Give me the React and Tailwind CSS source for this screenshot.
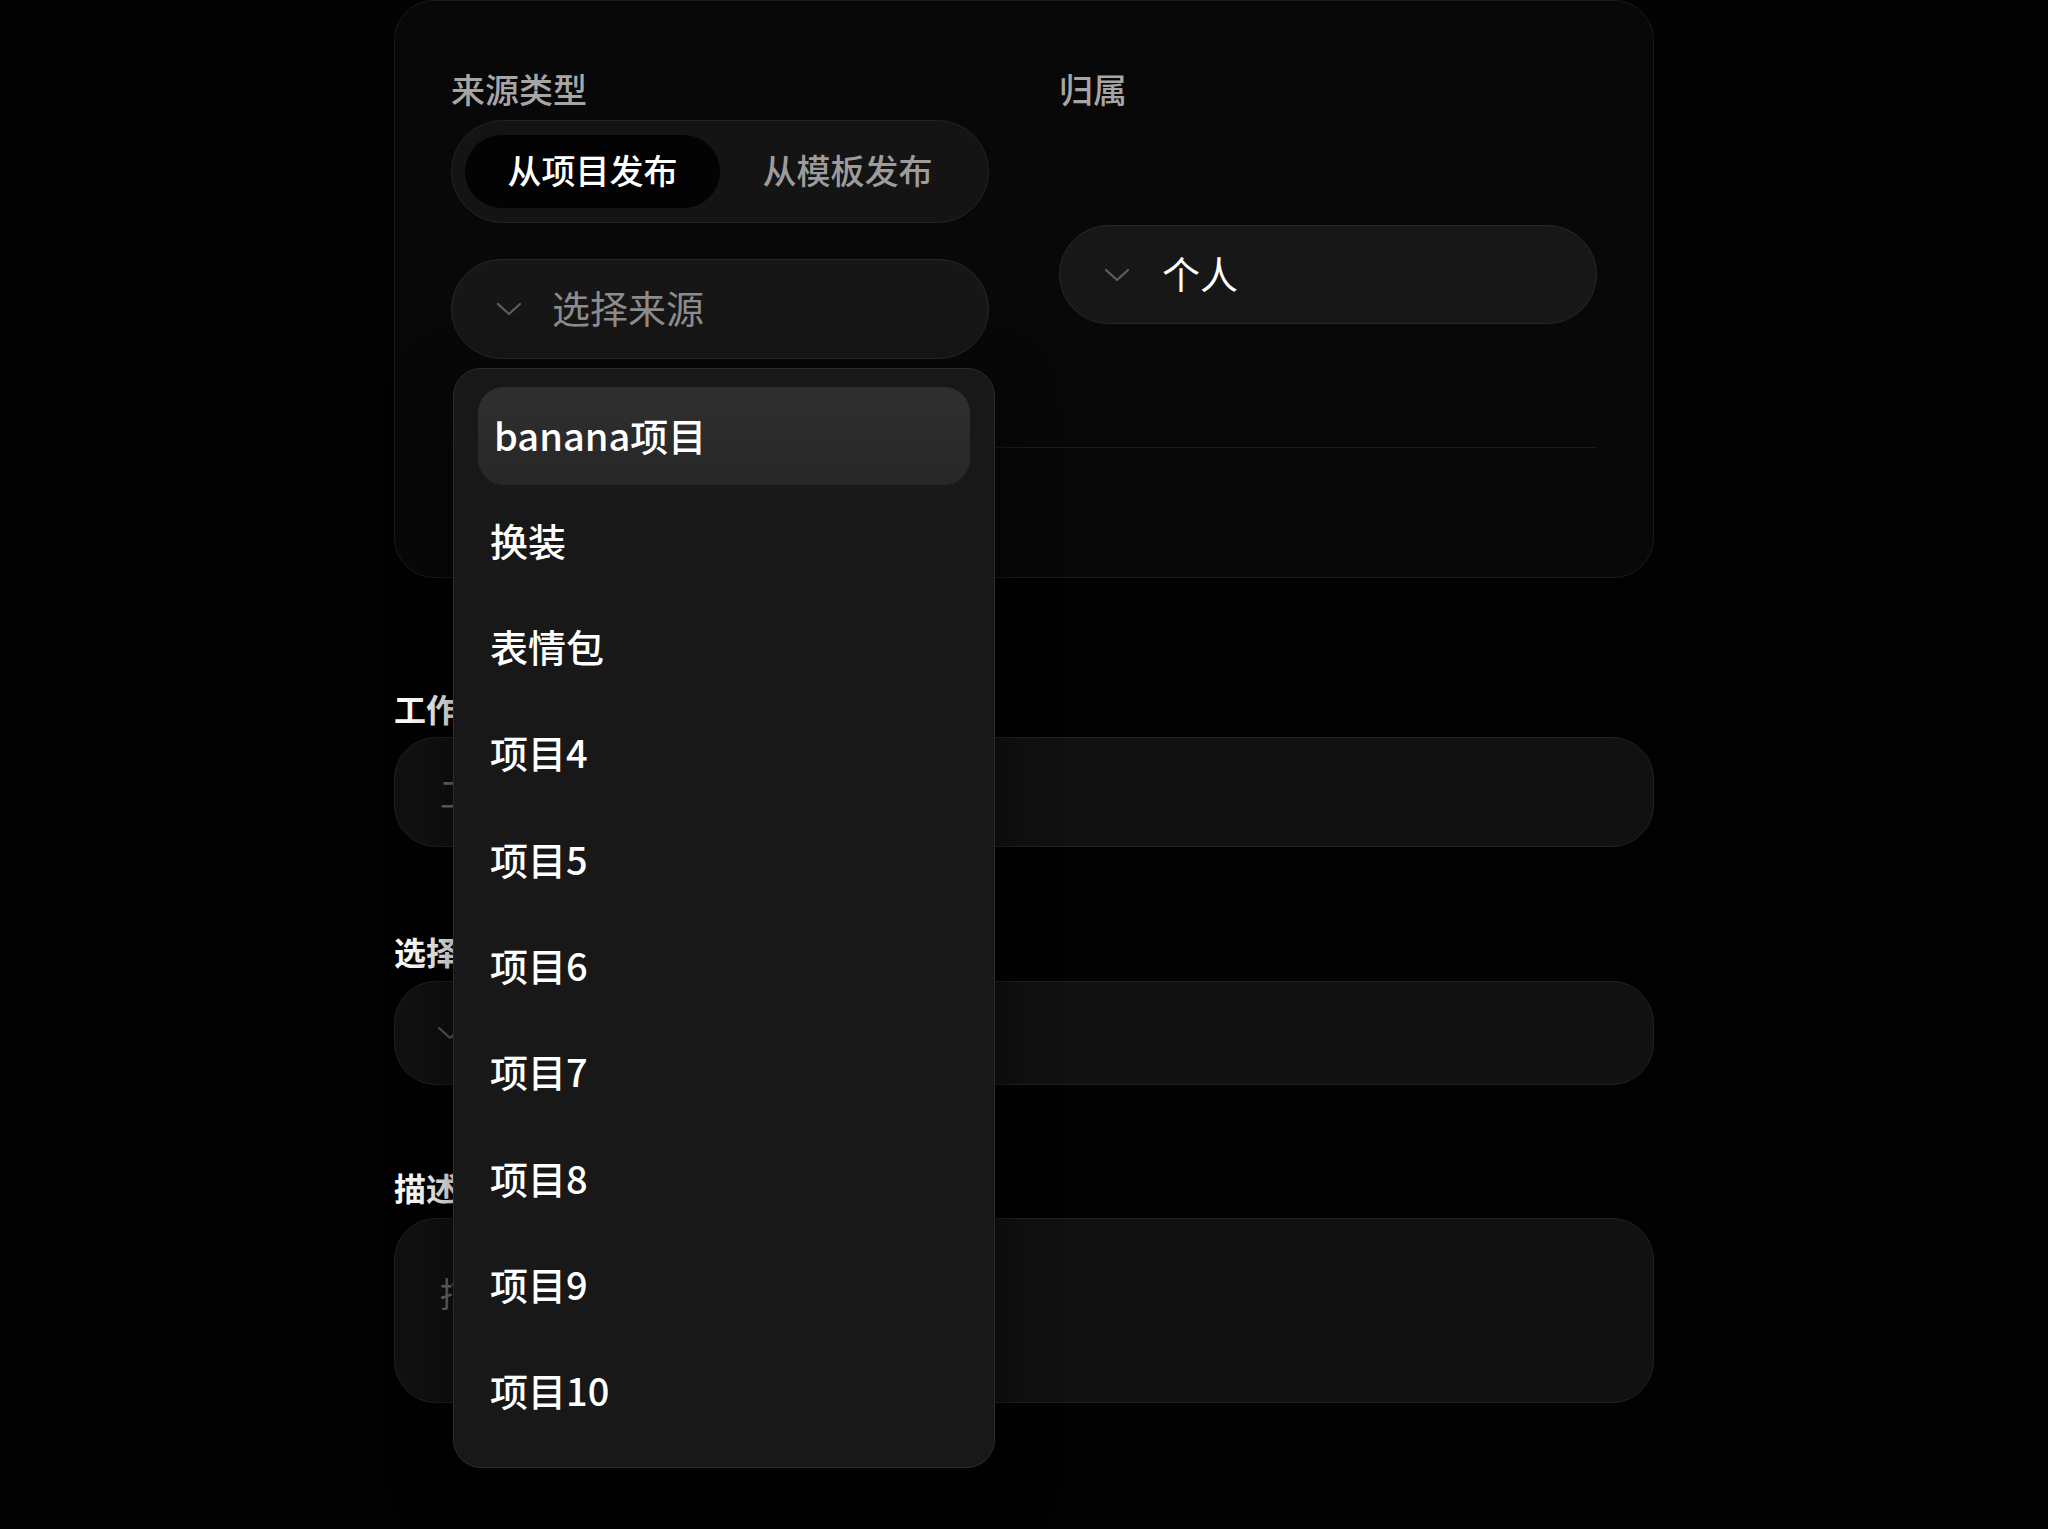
import React from "react";

const FONT = { fontFamily: '"Noto Sans CJK SC", "Noto Sans", sans-serif' };

function Chevron({ className }) {
  return (
    <svg viewBox="0 0 26 14" className={className} fill="none">
      <polyline points="2,2 13,12 24,2" stroke="currentColor" strokeWidth="2.2" strokeLinecap="round" strokeLinejoin="round" />
    </svg>
  );
}

const items = ["banana项目", "换装", "表情包", "项目4", "项目5", "项目6", "项目7", "项目8", "项目9", "项目10"];

export default function App() {
  return (
    <div className="min-h-screen w-full bg-[#020202]" style={FONT}>
      <div className="relative mx-auto w-[1260px] pb-[120px]">
        {/* Top card */}
        <div className="h-[578px] rounded-[40px] border border-[#1b1b1b] bg-[#080808] px-[56px] pt-[68px]">
          <div className="grid grid-cols-2 gap-x-[70px]">
            <div className="flex flex-col">
              <div className="h-[40px] text-[34px] leading-[40px] font-medium text-[#a6a6a6]">来源类型</div>
              <div className="mt-[11px] grid h-[103px] grid-cols-2 rounded-full border border-[#242424] bg-[#141414] px-[13px] py-[14px]">
                <div className="flex items-center justify-center rounded-full bg-[#030303] pb-[4px] text-[34px] font-medium text-white">从项目发布</div>
                <div className="flex items-center justify-center pb-[4px] text-[34px] font-medium text-[#9c9c9c]">从模板发布</div>
              </div>
              <div className="mt-[36px] flex h-[100px] items-center rounded-full border border-[#272727] bg-[#161616] pl-[44px]">
                <Chevron className="h-[14px] w-[26px] text-[#5e5e5e]" />
                <span className="ml-[30px] pb-[6px] text-[38px] text-[#8c8c8c]">选择来源</span>
              </div>
            </div>
            <div className="flex flex-col">
              <div className="h-[40px] text-[34px] leading-[40px] font-medium text-[#a6a6a6]">归属</div>
              <div className="mt-[116px] flex h-[99px] items-center rounded-full border border-[#282828] bg-[#171717] pl-[44px]">
                <Chevron className="h-[14px] w-[26px] text-[#5e5e5e]" />
                <span className="ml-[32px] pb-[4px] text-[38px] text-white">个人</span>
              </div>
            </div>
          </div>
          <div className="mt-[88px] h-px bg-[#1a1a1a]" />
        </div>

        {/* Lower form */}
        <div className="mt-[110px] h-[40px] text-[32px] leading-[40px] font-bold text-white">工作流名称</div>
        <div className="mt-[9px] flex h-[110px] items-center rounded-[42px] border border-[#222222] bg-[#111111] pl-[45px] text-[34px] text-[#6f6f6f]">
          工作流名称
        </div>

        <div className="mt-[84px] h-[40px] text-[32px] leading-[40px] font-bold text-white">选择分类</div>
        <div className="mt-[10px] flex h-[104px] items-center rounded-[42px] border border-[#222222] bg-[#111111] pl-[42px]">
          <Chevron className="h-[14px] w-[26px] text-[#5e5e5e]" />
          <span className="ml-[30px] text-[34px] text-[#6f6f6f]">选择分类</span>
        </div>

        <div className="mt-[82px] h-[40px] text-[32px] leading-[40px] font-bold text-white">描述</div>
        <div className="mt-[11px] h-[185px] rounded-[42px] border border-[#222222] bg-[#111111] pl-[45px] pt-[48px] text-[34px] text-[#6f6f6f]">
          描述该工作流的用途
        </div>

        {/* Dropdown menu */}
        <div className="absolute left-[59px] top-[368px] flex h-[1100px] w-[542px] flex-col gap-[8.3px] rounded-[28px] border border-[#2b2b2b] bg-[#181818] px-[24px] pt-[18px] shadow-[0_20px_60px_rgba(0,0,0,0.6)]">
          {items.map((it, i) => (
            <div
              key={it}
              className={
                i === 0
                  ? "flex h-[98px] shrink-0 items-center rounded-[26px] bg-gradient-to-b from-[#2f2f2f] to-[#272727] pb-[4px] pl-[16px] text-[38px] font-medium text-white"
                  : "flex h-[98px] shrink-0 items-center rounded-[26px] pb-[6px] pl-[12px] text-[38px] font-medium text-white"
              }
            >
              {it}
            </div>
          ))}
        </div>
      </div>
    </div>
  );
}
